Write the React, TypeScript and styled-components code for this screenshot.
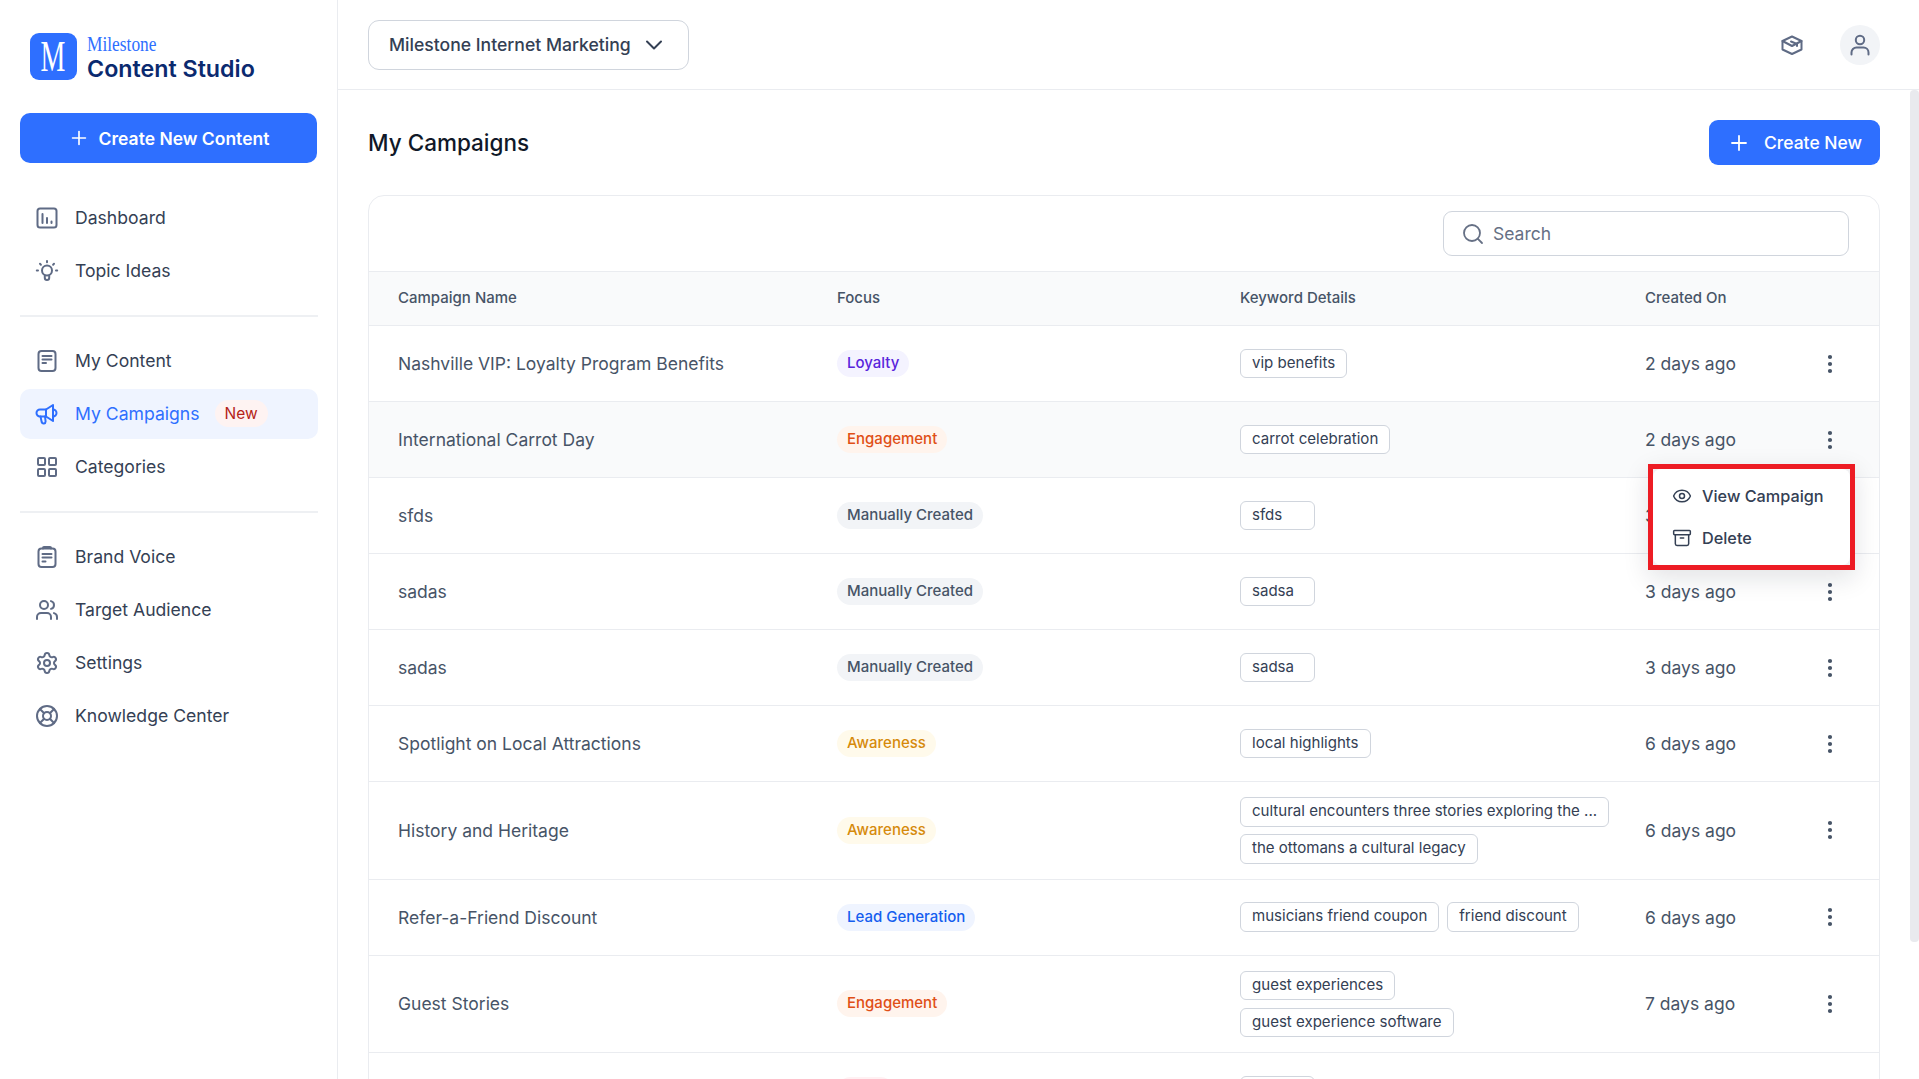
import React, { ReactNode } from "react";
import styled, { createGlobalStyle } from "styled-components";
import {
  Archive,
  ChevronDown,
  EllipsisVertical,
  Eye,
  LayoutGrid,
  LifeBuoy,
  Plus,
  Search,
  Settings,
  Users,
} from "lucide-react";

const colors = {
  primary: "#2e6fff",
  ink: "#344054",
  body: "#475467",
  muted: "#667085",
  line: "#eaecf0",
  tagLine: "#d0d5dd",
  wash: "#f9fafb",
};

type BadgeTone = "loyalty" | "engagement" | "manual" | "awareness" | "lead" | "pink";

const badgeTones: Record<BadgeTone, { bg: string; fg: string }> = {
  loyalty: { bg: "#f4f3ff", fg: "#5925dc" },
  engagement: { bg: "#fff4ed", fg: "#e04f16" },
  manual: { bg: "#f2f4f7", fg: "#475467" },
  awareness: { bg: "#fffaeb", fg: "#d68a0c" },
  lead: { bg: "#eff4ff", fg: "#155eef" },
  pink: { bg: "#fff1f3", fg: "#c01048" },
};

const GlobalStyle = createGlobalStyle`
  html, body {
    margin: 0;
    height: 100%;
    overflow: hidden;
    background: #fff;
    font-family: Inter, "Liberation Sans", sans-serif;
  }
  * { box-sizing: border-box; }
`;

const Shell = styled.div`
  display: flex;
  height: 100vh;
  overflow: hidden;
`;

const Sidebar = styled.aside`
  flex: 0 0 337px;
  border-right: 1px solid ${colors.line};
  padding: 33px 19px 0 20px;
`;

const Brand = styled.div`
  display: flex;
  align-items: center;
  gap: 10px;
  padding-left: 10px;
  height: 47px;
`;

const BrandMark = styled.div`
  width: 47px;
  height: 47px;
  border-radius: 9px;
  background: ${colors.primary};
  color: #fff;
  display: flex;
  align-items: center;
  justify-content: center;
  font-family: "Liberation Serif", serif;
  font-size: 45px;
  line-height: 1;
  span {
    display: block;
    transform: scaleX(0.62);
  }
`;

const BrandText = styled.div`
  display: flex;
  flex-direction: column;
  margin-top: 4px;
`;

const BrandTop = styled.span`
  font-family: "Liberation Serif", serif;
  font-size: 22px;
  line-height: 20px;
  color: ${colors.primary};
  transform: scaleX(0.79);
  transform-origin: left center;
`;

const BrandName = styled.span`
  font-size: 23.25px;
  line-height: 29px;
  font-weight: 600;
  color: #0b2a6f;
`;

const PrimaryButton = styled.button<{ $wide?: boolean }>`
  display: flex;
  align-items: center;
  justify-content: center;
  gap: ${(p) => (p.$wide ? "9px" : "13px")};
  width: ${(p) => (p.$wide ? "297px" : "171px")};
  height: ${(p) => (p.$wide ? "50px" : "45px")};
  margin-top: ${(p) => (p.$wide ? "33px" : "0")};
  border: 0;
  border-radius: ${(p) => (p.$wide ? "10px" : "9px")};
  background: ${colors.primary};
  color: #fff;
  font-family: inherit;
  font-size: 17.5px;
  font-weight: ${(p) => (p.$wide ? 600 : 500)};
`;

const NavGroup = styled.nav<{ $last?: boolean }>`
  display: flex;
  flex-direction: column;
  gap: 3px;
  padding: 18.5px 0 ${(p) => (p.$last ? "0" : "19.5px")};
  border-bottom: ${(p) => (p.$last ? "none" : `2px solid #eef0f3`)};
  &:first-of-type {
    padding-top: 29.5px;
    padding-bottom: 19.5px;
  }
`;

const NavItem = styled.div<{ $active?: boolean }>`
  display: flex;
  align-items: center;
  height: 50px;
  padding-left: 15px;
  gap: 16px;
  width: 298px;
  border-radius: 10px;
  background: ${(p) => (p.$active ? "#eff4ff" : "transparent")};
  color: ${(p) => (p.$active ? colors.primary : colors.ink)};
  font-size: 17.6px;
  svg {
    color: ${(p) => (p.$active ? colors.primary : "#5f6b85")};
    flex: none;
  }
`;

const NewPill = styled.span`
  margin-left: -1px;
  padding: 0 10px;
  height: 27px;
  line-height: 27px;
  border-radius: 14px;
  background: #fef3f2;
  color: #b42318;
  font-size: 15.5px;
`;

const Main = styled.div`
  flex: 1;
  min-width: 0;
  display: flex;
  flex-direction: column;
`;

const TopBar = styled.header`
  flex: 0 0 90px;
  display: flex;
  align-items: center;
  justify-content: space-between;
  padding: 0 39px 0 30px;
  border-bottom: 1px solid ${colors.line};
`;

const AccountSelect = styled.div`
  display: flex;
  align-items: center;
  gap: 9px;
  height: 50px;
  width: 321px;
  padding: 0 20px;
  border: 1px solid ${colors.tagLine};
  border-radius: 11px;
  color: ${colors.ink};
  font-size: 17.6px;
  font-weight: 500;
  white-space: nowrap;
`;

const TopActions = styled.div`
  display: flex;
  align-items: center;
  gap: 36px;
  color: #5f6b85;
`;

const Avatar = styled.div`
  width: 40px;
  height: 40px;
  border-radius: 50%;
  background: #f2f4f7;
  display: flex;
  align-items: center;
  justify-content: center;
`;

const ScrollArea = styled.div`
  position: relative;
  flex: 1;
  min-height: 0;
  overflow: hidden;
`;

const ScrollThumb = styled.div`
  position: absolute;
  top: 0;
  right: 0;
  width: 9px;
  height: 852px;
  background: #e9eaee;
  border-radius: 4px;
`;

const Content = styled.main`
  padding: 30px 39px 0 30px;
`;

const TitleRow = styled.div`
  display: flex;
  align-items: center;
  justify-content: space-between;
  margin-bottom: 30px;
`;

const Title = styled.h1`
  margin: 0;
  font-size: 22.5px;
  font-weight: 500;
  color: #101828;
`;

const Card = styled.section`
  position: relative;
  border: 1px solid ${colors.line};
  border-radius: 16px 16px 0 0;
`;

const Toolbar = styled.div`
  display: flex;
  justify-content: flex-end;
  padding: 15px 30px 15px 0;
  border-bottom: 1px solid ${colors.line};
`;

const SearchBox = styled.div`
  display: flex;
  align-items: center;
  gap: 8px;
  width: 406px;
  height: 45px;
  padding-left: 17px;
  border: 1px solid ${colors.tagLine};
  border-radius: 9px;
  color: ${colors.muted};
  font-size: 17.5px;
`;

const gridColumns = "439px 403px 405px 1fr";

const HeadRow = styled.div`
  display: grid;
  grid-template-columns: ${gridColumns};
  align-items: center;
  height: 54px;
  padding: 0 0 2px 29px;
  background: ${colors.wash};
  border-bottom: 1px solid ${colors.line};
  color: ${colors.body};
  font-size: 15px;
  font-weight: 500;
`;

const Row = styled.div<{ $hover?: boolean }>`
  position: relative;
  display: grid;
  grid-template-columns: ${gridColumns};
  align-items: center;
  min-height: 76px;
  padding: 15px 0 15px 29px;
  background: ${(p) => (p.$hover ? colors.wash : "#fff")};
  border-bottom: 1px solid ${colors.line};
  color: ${colors.body};
  font-size: 17.5px;
`;

const Badge = styled.span<{ $tone: BadgeTone }>`
  justify-self: start;
  height: 27px;
  line-height: 26px;
  padding: 0 10px;
  border-radius: 14px;
  font-size: 15px;
  font-weight: 500;
  background: ${(p) => badgeTones[p.$tone].bg};
  color: ${(p) => badgeTones[p.$tone].fg};
`;

// the row cut by the bottom of the window: only the tops of its pills show
const PeekBadge = styled(Badge)`
  width: 57px;
`;

const TagList = styled.div`
  display: flex;
  flex-wrap: wrap;
  gap: 7.5px 8px;
  padding-right: 30px;
`;

const Tag = styled.span`
  height: 29.5px;
  line-height: 26.5px;
  min-width: 75px;
  padding: 0 11px;
  border: 1px solid ${colors.tagLine};
  border-radius: 6px;
  background: #fff;
  color: ${colors.ink};
  font-size: 15.05px;
  white-space: nowrap;
`;

const DateCell = styled.div`
  display: flex;
  align-items: center;
  justify-content: space-between;
  padding-right: 37px;
  svg {
    color: ${colors.body};
  }
`;

const Annotation = styled.div`
  position: absolute;
  z-index: 5;
  top: 62px;
  right: 24px;
  width: 207px;
  height: 106px;
  border: 5px solid #ed1c24;
  background: #f1f1f3;
  box-shadow: 0 8px 24px rgba(16, 24, 40, 0.12);
`;

const Menu = styled.div`
  height: 100%;
  padding: 6px 0 0 19px;
  background: #fff;
  border-radius: 8px;
`;

const MenuItem = styled.div`
  display: flex;
  align-items: center;
  gap: 10px;
  height: 42px;
  color: ${colors.ink};
  font-size: 16.25px;
  font-weight: 500;
  svg {
    flex: none;
  }
`;

const Glyph = ({ children, size = 24 }: { children: ReactNode; size?: number }) => (
  <svg
    width={size}
    height={size}
    viewBox="0 0 24 24"
    fill="none"
    stroke="currentColor"
    strokeWidth="2"
    strokeLinecap="round"
    strokeLinejoin="round"
  >
    {children}
  </svg>
);

const DashboardIcon = () => (
  <Glyph>
    <rect x="2.5" y="2.5" width="19" height="19" rx="2.5" />
    <path d="M7.5 8v9M12 12v5M16.5 15.5V17" />
  </Glyph>
);

const BulbIcon = () => (
  <Glyph>
    <circle cx="12" cy="11.5" r="5" />
    <path d="M9.8 16.5v2.2a2.2 2.2 0 0 0 4.4 0v-2.2M12 2v1.2M5 4.8l.9.9M19 4.8l-.9.9M1.8 11.5H3M21 11.5h1.2" />
  </Glyph>
);

const DocIcon = () => (
  <Glyph>
    <rect x="3.5" y="2" width="17" height="20" rx="3" />
    <path d="M7.5 7h9M7.5 10.5h9M7.5 14h3.5" />
  </Glyph>
);

const ClipIcon = () => (
  <Glyph>
    <rect x="3.5" y="3.5" width="17" height="18.5" rx="3" />
    <path d="M8 3.5V3a1 1 0 0 1 1-1h6a1 1 0 0 1 1 1v.5M7.5 9h9M7.5 12.5h9M7.5 16.5h3" />
  </Glyph>
);

const MegaphoneIcon = () => (
  <Glyph>
    <path d="M18 3 11 7.5H5a3.5 3.5 0 0 0-3.5 3.5A3.5 3.5 0 0 0 5 14.5h6l7 4.5z" />
    <path d="M5.5 14.5l1.2 5.6a2 2 0 0 0 3.9-.6l-.6-5" />
    <path d="M11 7.5v7" />
    <path d="M18 7.5a3.5 3.5 0 0 1 0 7" />
  </Glyph>
);

const CapIcon = () => (
  <Glyph>
    <path d="M12 3.5 21.5 8v8.5L12 21 2.5 16.5V8z" />
    <path d="M2.5 8l9.5 5 9.5-5" />
    <path d="M11 8.5l6 2.5v2" />
  </Glyph>
);

const UserIcon = () => (
  <Glyph>
    <circle cx="12" cy="7" r="4.2" />
    <path d="M3.5 21.5v-2a5 5 0 0 1 5-5h7a5 5 0 0 1 5 5v2" />
  </Glyph>
);

type Campaign = {
  name: string;
  focus: string;
  tone: BadgeTone;
  keywords: string[];
  created: string;
};

const campaigns: Campaign[] = [
  { name: "Nashville VIP: Loyalty Program Benefits", focus: "Loyalty", tone: "loyalty", keywords: ["vip benefits"], created: "2 days ago" },
  { name: "International Carrot Day", focus: "Engagement", tone: "engagement", keywords: ["carrot celebration"], created: "2 days ago" },
  { name: "sfds", focus: "Manually Created", tone: "manual", keywords: ["sfds"], created: "3 days ago" },
  { name: "sadas", focus: "Manually Created", tone: "manual", keywords: ["sadsa"], created: "3 days ago" },
  { name: "sadas", focus: "Manually Created", tone: "manual", keywords: ["sadsa"], created: "3 days ago" },
  { name: "Spotlight on Local Attractions", focus: "Awareness", tone: "awareness", keywords: ["local highlights"], created: "6 days ago" },
  { name: "History and Heritage", focus: "Awareness", tone: "awareness", keywords: ["cultural encounters three stories exploring the ...", "the ottomans a cultural legacy"], created: "6 days ago" },
  { name: "Refer-a-Friend Discount", focus: "Lead Generation", tone: "lead", keywords: ["musicians friend coupon", "friend discount"], created: "6 days ago" },
  { name: "Guest Stories", focus: "Engagement", tone: "engagement", keywords: ["guest experiences", "guest experience software"], created: "7 days ago" },
];

const App = () => {
  return (
    <Shell>
      <GlobalStyle />
      <Sidebar>
        <Brand>
          <BrandMark>
            <span>M</span>
          </BrandMark>
          <BrandText>
            <BrandTop>Milestone</BrandTop>
            <BrandName>Content Studio</BrandName>
          </BrandText>
        </Brand>
        <PrimaryButton $wide>
          <Plus size={22} strokeWidth={1.8} />
          Create New Content
        </PrimaryButton>
        <NavGroup>
          <NavItem><DashboardIcon />Dashboard</NavItem>
          <NavItem><BulbIcon />Topic Ideas</NavItem>
        </NavGroup>
        <NavGroup>
          <NavItem><DocIcon />My Content</NavItem>
          <NavItem $active>
            <MegaphoneIcon />
            My Campaigns
            <NewPill>New</NewPill>
          </NavItem>
          <NavItem><LayoutGrid size={24} strokeWidth={2} />Categories</NavItem>
        </NavGroup>
        <NavGroup $last>
          <NavItem><ClipIcon />Brand Voice</NavItem>
          <NavItem><Users size={24} strokeWidth={2} />Target Audience</NavItem>
          <NavItem><Settings size={24} strokeWidth={2} />Settings</NavItem>
          <NavItem><LifeBuoy size={24} strokeWidth={2} />Knowledge Center</NavItem>
        </NavGroup>
      </Sidebar>
      <Main>
        <TopBar>
          <AccountSelect>
            Milestone Internet Marketing
            <ChevronDown size={28} strokeWidth={1.7} />
          </AccountSelect>
          <TopActions>
            <CapIcon />
            <Avatar><UserIcon /></Avatar>
          </TopActions>
        </TopBar>
        <ScrollArea>
          <ScrollThumb />
          <Content>
            <TitleRow>
              <Title>My Campaigns</Title>
              <PrimaryButton>
                <Plus size={24} strokeWidth={1.8} />
                Create New
              </PrimaryButton>
            </TitleRow>
            <Card>
              <Toolbar>
                <SearchBox>
                  <Search size={24} strokeWidth={1.8} />
                  Search
                </SearchBox>
              </Toolbar>
              <HeadRow>
                <div>Campaign Name</div>
                <div>Focus</div>
                <div>Keyword Details</div>
                <div>Created On</div>
              </HeadRow>
              {campaigns.map((c, i) => (
                <Row key={i} $hover={i === 1}>
                  <div>{c.name}</div>
                  <Badge $tone={c.tone}>{c.focus}</Badge>
                  <TagList>
                    {c.keywords.map((k) => (
                      <Tag key={k}>{k}</Tag>
                    ))}
                  </TagList>
                  <DateCell>
                    {c.created}
                    <EllipsisVertical size={24} strokeWidth={2.2} />
                  </DateCell>
                  {i === 1 && (
                    <Annotation>
                      <Menu>
                        <MenuItem><Eye size={20} strokeWidth={1.8} />View Campaign</MenuItem>
                        <MenuItem><Archive size={20} strokeWidth={1.8} />Delete</MenuItem>
                      </Menu>
                    </Annotation>
                  )}
                </Row>
              ))}
              <Row>
                <div />
                <PeekBadge $tone="pink" />
                <TagList><Tag /></TagList>
                <div />
              </Row>
            </Card>
          </Content>
        </ScrollArea>
      </Main>
    </Shell>
  );
};

export default App;
